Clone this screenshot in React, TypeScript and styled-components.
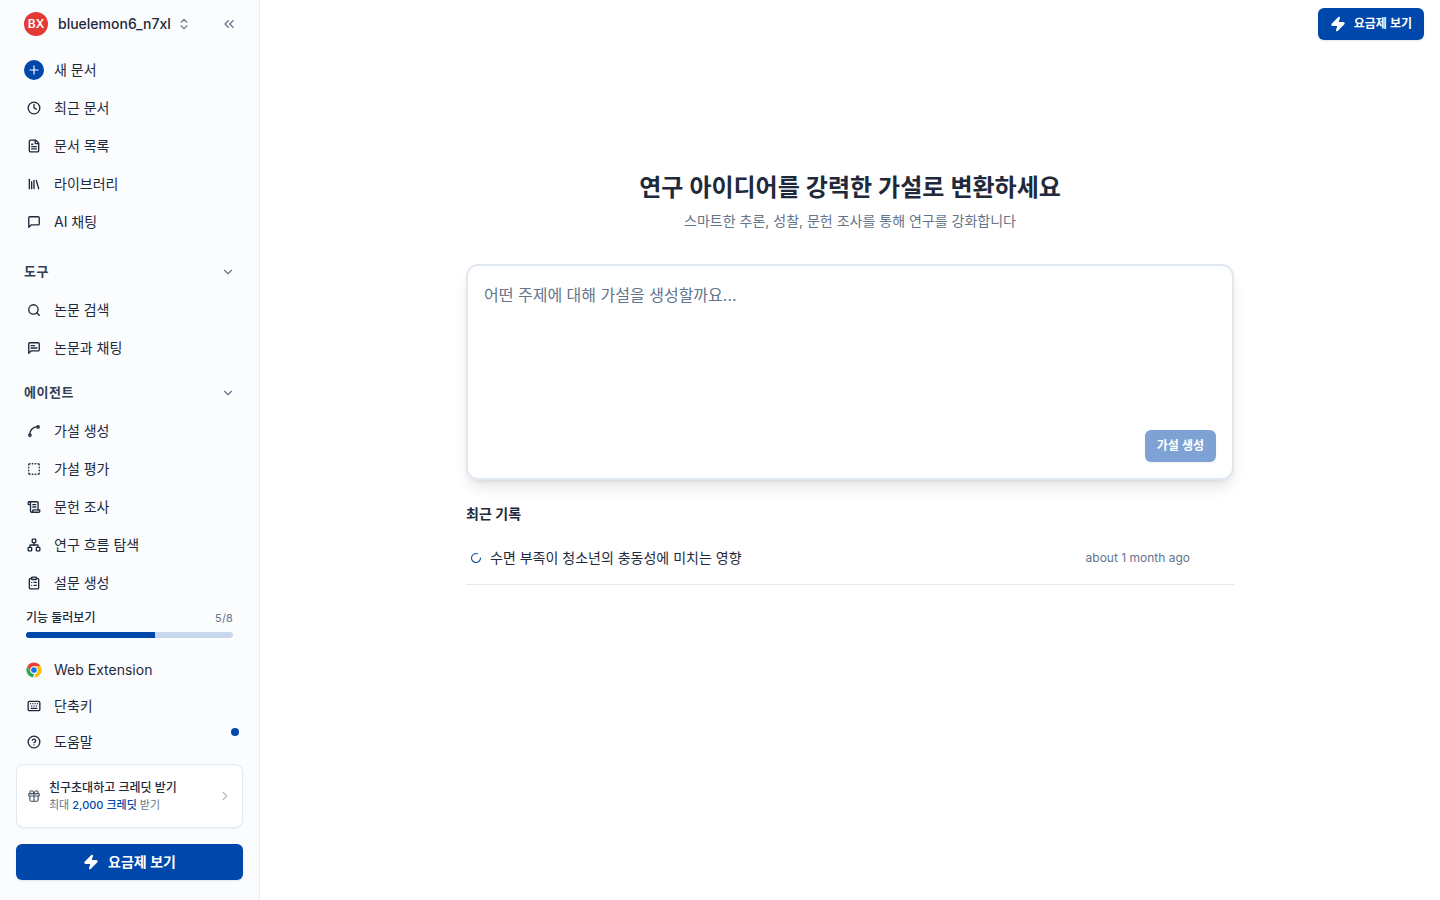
import React from "react";
import styled, { createGlobalStyle, css } from "styled-components";
import {
  ChevronDown,
  ChevronRight,
  ChevronsLeft,
  ChevronsUpDown,
  CircleHelp,
  ClipboardList,
  Clock,
  FileText,
  Gift,
  Keyboard,
  Library,
  Network,
  Plus,
  ScrollText,
  Search,
  Spline,
  SquareDashed,
} from "lucide-react";

const GlobalStyle = createGlobalStyle`
  *, *::before, *::after { box-sizing: border-box; }
  body {
    margin: 0;
    background: #fff;
    color: #1e293b;
    font-family: Inter, "Noto Sans CJK KR", sans-serif;
    font-size: 14px;
    line-height: 20px;
  }
  button { font: inherit; color: inherit; border: 0; background: none; padding: 0; }
  h1, h2, p { margin: 0; }
`;

const Page = styled.div`
  display: flex;
  height: 100vh;
  overflow: hidden;
`;

const Sidebar = styled.aside`
  display: flex;
  flex-direction: column;
  flex: none;
  width: 260px;
  background: #fbfcfe;
  border-right: 1px solid #e9edf3;
`;

const AccountBar = styled.header`
  display: flex;
  align-items: center;
  height: 48px;
  margin-bottom: 4px;
  padding: 0 22px 0 24px;
  color: #64748b;
`;

const Avatar = styled.span`
  display: flex;
  align-items: center;
  justify-content: center;
  width: 24px;
  height: 24px;
  margin-right: 10px;
  border-radius: 50%;
  background: #e53935;
  color: #fff;
  font-size: 12px;
  font-weight: 600;
`;

const AccountName = styled.span`
  margin-right: 6px;
  color: #1e293b;
  font-weight: 500;
`;

const CollapseButton = styled.button`
  display: flex;
  margin-left: auto;
`;

const NavList = styled.nav<{ $gap?: number }>`
  display: flex;
  flex-direction: column;
  gap: ${(p) => p.$gap ?? 2}px;
  padding: 0 16px;
`;

const NavItem = styled.a`
  position: relative;
  display: flex;
  align-items: center;
  gap: 10px;
  height: 36px;
  padding-left: 8px;
  color: #1e293b;
`;

const NavLabel = styled.span`
  padding-bottom: 1px;
`;

const NavIcon = styled.span<{ $filled?: boolean }>`
  display: flex;
  align-items: center;
  justify-content: center;
  width: 20px;
  height: 20px;
  ${(p) =>
    p.$filled &&
    css`
      border-radius: 50%;
      background: #0047ab;
      color: #fff;
    `}
`;

const NotificationDot = styled.span`
  position: absolute;
  top: 4px;
  right: 4px;
  width: 8px;
  height: 8px;
  border-radius: 50%;
  background: #0047ab;
`;

const SectionHeader = styled.div<{ $top: number }>`
  display: flex;
  align-items: center;
  justify-content: space-between;
  height: 36px;
  margin-top: ${(p) => p.$top}px;
  margin-bottom: 2px;
  padding: 0 24px;
  color: #64748b;
`;

const SectionTitle = styled.h2`
  padding-bottom: 2px;
  color: #334155;
  font-size: 13px;
  font-weight: 600;
  letter-spacing: 0.04em;
`;

const Tour = styled.div`
  padding: 0 26px;
  margin: 7px 0 14px;
`;

const TourLabels = styled.div`
  display: flex;
  justify-content: space-between;
  height: 24px;
  font-size: 12px;
  line-height: 20px;
  font-weight: 500;
`;

const TourCount = styled.span`
  color: #64748b;
  font-size: 11px;
  font-weight: 400;
  font-variant-numeric: tabular-nums;
`;

const TourTrack = styled.div`
  height: 6px;
  border-radius: 3px;
  background: #c7d7ed;
  overflow: hidden;
`;

const TourFill = styled.div`
  height: 100%;
  background: #0047ab;
`;

const InviteCard = styled.a`
  display: flex;
  align-items: center;
  height: 64px;
  margin: 4px 16px 16px;
  padding: 0 10px;
  border: 1px solid #e2e8f0;
  border-radius: 8px;
  background: #fff;
  box-shadow: 0 1px 2px rgba(0, 0, 0, 0.05);
  color: #475569;
`;

const InviteText = styled.div`
  flex: 1;
  margin-left: 8px;
  color: #64748b;
  font-size: 11px;
  line-height: 16px;
`;

const InviteTitle = styled.p`
  color: #1e293b;
  font-size: 12px;
  font-weight: 500;
  line-height: 18px;
`;

const Credits = styled.span`
  color: #0047ab;
  font-weight: 500;
`;

const PrimaryButton = styled.button<{ $size: "sm" | "md"; $disabled?: boolean }>`
  display: flex;
  align-items: center;
  justify-content: center;
  gap: ${(p) => (p.$size === "md" ? 9 : 8)}px;
  height: ${(p) => (p.$size === "md" ? 36 : 32)}px;
  padding: 0 12px;
  border-radius: 6px;
  background: #0047ab;
  color: #fff;
  font-size: ${(p) => (p.$size === "md" ? 14 : 12)}px;
  font-weight: 600;
  box-shadow: 0 1px 2px rgba(0, 0, 0, 0.1);
  opacity: ${(p) => (p.$disabled ? 0.5 : 1)};
`;

const SidebarAction = styled.div`
  display: grid;
  padding: 0 16px;
`;

const Main = styled.main`
  display: flex;
  flex: 1;
  flex-direction: column;
  align-items: center;
`;

const TopBar = styled.header`
  display: flex;
  justify-content: flex-end;
  align-items: center;
  align-self: stretch;
  height: 48px;
  padding-right: 16px;
`;

const Content = styled.div`
  width: 768px;
  padding-top: 122px;
`;

const Title = styled.h1`
  color: #1e293b;
  font-size: 24px;
  font-weight: 600;
  line-height: 36px;
  text-align: center;
`;

const Subtitle = styled.p`
  margin-top: 5px;
  color: #64748b;
  text-align: center;
`;

const Composer = styled.section`
  display: flex;
  flex-direction: column;
  justify-content: space-between;
  align-items: flex-end;
  height: 216px;
  margin-top: 33px;
  padding: 16px;
  border: 2px solid #e2e8f0;
  border-radius: 12px;
  background: #fff;
  box-shadow: 0 10px 15px -3px rgba(0, 0, 0, 0.1), 0 4px 6px -4px rgba(0, 0, 0, 0.1);
`;

const Placeholder = styled.p`
  align-self: stretch;
  color: #64748b;
  font-size: 16px;
  line-height: 26px;
`;

const HistoryTitle = styled.h2`
  margin-top: 24px;
  font-size: 14px;
  font-weight: 600;
`;

const HistoryRow = styled.div`
  display: flex;
  align-items: center;
  height: 54px;
  margin-top: 7px;
  padding: 0 44px 0 4px;
  border-bottom: 1px solid #e2e8f0;
`;

const HistoryName = styled.span`
  flex: 1;
  margin-left: 8px;
`;

const HistoryTime = styled.time`
  color: #64748b;
  font-size: 12px;
`;

const Bolt = ({ size }: { size: number }) => (
  <svg width={size} height={size} viewBox="0 0 24 24" fill="currentColor" stroke="currentColor" strokeWidth="2" strokeLinecap="round" strokeLinejoin="round">
    <path d="M4 14a1 1 0 0 1-.78-1.63l9.9-10.2a.5.5 0 0 1 .86.46l-1.92 6.02A1 1 0 0 0 13 10h7a1 1 0 0 1 .78 1.63l-9.9 10.2a.5.5 0 0 1-.86-.46l1.92-6.02A1 1 0 0 0 11 14z" />
  </svg>
);

const iconProps = { size: 14, strokeWidth: 2.3 };

const Bubble = ({ lines }: { lines?: boolean }) => (
  <svg width="14" height="14" viewBox="0 0 24 24" fill="none" stroke="currentColor" strokeWidth="2.3" strokeLinecap="round" strokeLinejoin="round">
    <path d="M21 15a2 2 0 0 1-2 2H7l-4 4V5a2 2 0 0 1 2-2h14a2 2 0 0 1 2 2z" />
    {lines && <path d="M13 8H7M17 12H7" />}
  </svg>
);

const ChromeLogo = () => (
  <svg width="16" height="16" viewBox="-1.5 -1.5 51 51">
    <path fill="#ea4335" d="M3.2 12A24 24 0 0 1 44.8 12H24L13.6 30Z" />
    <path fill="#fbbc05" d="M24 12h20.8A24 24 0 0 1 24 48l10.4-18Z" />
    <path fill="#34a853" d="M3.2 12 13.6 30A12 12 0 0 0 34.4 30L24 48A24 24 0 0 1 3.2 12Z" />
    <path d="M31 31 21.5 48" stroke="#fff" strokeWidth="4" />
    <circle cx="24" cy="24" r="12" fill="#fff" />
    <circle cx="24" cy="24" r="9" fill="#1a73e8" />
  </svg>
);

const Spinner = () => (
  <svg width="12" height="12" viewBox="0 0 24 24" fill="none" stroke="#0047ab" strokeWidth="2.2" strokeLinecap="round">
    <path d="M21 12a9 9 0 1 1-6.219-8.56" />
  </svg>
);

type Entry = { label: string; icon: React.ReactNode; filled?: boolean; dot?: boolean };

const mainEntries: Entry[] = [
  { label: "새 문서", icon: <Plus size={14} />, filled: true },
  { label: "최근 문서", icon: <Clock {...iconProps} /> },
  { label: "문서 목록", icon: <FileText {...iconProps} /> },
  { label: "라이브러리", icon: <Library {...iconProps} /> },
  { label: "AI 채팅", icon: <Bubble /> },
];

const toolEntries: Entry[] = [
  { label: "논문 검색", icon: <Search {...iconProps} /> },
  { label: "논문과 채팅", icon: <Bubble lines /> },
];

const agentEntries: Entry[] = [
  { label: "가설 생성", icon: <Spline {...iconProps} /> },
  { label: "가설 평가", icon: <SquareDashed {...iconProps} /> },
  { label: "문헌 조사", icon: <ScrollText {...iconProps} /> },
  { label: "연구 흐름 탐색", icon: <Network {...iconProps} /> },
  { label: "설문 생성", icon: <ClipboardList {...iconProps} /> },
];

const supportEntries: Entry[] = [
  { label: "Web Extension", icon: <ChromeLogo /> },
  { label: "단축키", icon: <Keyboard {...iconProps} /> },
  { label: "도움말", icon: <CircleHelp {...iconProps} />, dot: true },
];

const NavGroup = ({ entries, gap }: { entries: Entry[]; gap?: number }) => (
  <NavList $gap={gap}>
    {entries.map((e) => (
      <NavItem key={e.label}>
        <NavIcon $filled={e.filled}>{e.icon}</NavIcon>
        <NavLabel>{e.label}</NavLabel>
        {e.dot && <NotificationDot />}
      </NavItem>
    ))}
  </NavList>
);

const Section = ({ title, top }: { title: string; top: number }) => (
  <SectionHeader $top={top}>
    <SectionTitle>{title}</SectionTitle>
    <ChevronDown size={14} />
  </SectionHeader>
);

export default function App() {
  const done = 5;
  const total = 8;
  return (
    <Page>
      <GlobalStyle />
      <Sidebar>
        <AccountBar>
          <Avatar>BX</Avatar>
          <AccountName>bluelemon6_n7xl</AccountName>
          <ChevronsUpDown size={14} />
          <CollapseButton aria-label="collapse">
            <ChevronsLeft size={16} />
          </CollapseButton>
        </AccountBar>
        <NavGroup entries={mainEntries} />
        <Section title="도구" top={14} />
        <NavGroup entries={toolEntries} />
        <Section title="에이전트" top={9} />
        <NavGroup entries={agentEntries} />
        <Tour>
          <TourLabels>
            <span>기능 둘러보기</span>
            <TourCount>
              {done}/{total}
            </TourCount>
          </TourLabels>
          <TourTrack>
            <TourFill style={{ width: `${(done / total) * 100}%` }} />
          </TourTrack>
        </Tour>
        <NavGroup entries={supportEntries} gap={0} />
        <InviteCard>
          <Gift size={14} />
          <InviteText>
            <InviteTitle>친구초대하고 크레딧 받기</InviteTitle>
            <p>
              최대 <Credits>2,000 크레딧</Credits> 받기
            </p>
          </InviteText>
          <ChevronRight size={14} color="#b4bcc8" />
        </InviteCard>
        <SidebarAction>
          <PrimaryButton $size="md">
            <Bolt size={16} />
            요금제 보기
          </PrimaryButton>
        </SidebarAction>
      </Sidebar>
      <Main>
        <TopBar>
          <PrimaryButton $size="sm">
            <Bolt size={16} />
            요금제 보기
          </PrimaryButton>
        </TopBar>
        <Content>
          <Title>연구 아이디어를 강력한 가설로 변환하세요</Title>
          <Subtitle>스마트한 추론, 성찰, 문헌 조사를 통해 연구를 강화합니다</Subtitle>
          <Composer>
            <Placeholder>어떤 주제에 대해 가설을 생성할까요...</Placeholder>
            <PrimaryButton $size="sm" $disabled>
              가설 생성
            </PrimaryButton>
          </Composer>
          <HistoryTitle>최근 기록</HistoryTitle>
          <HistoryRow>
            <Spinner />
            <HistoryName>수면 부족이 청소년의 충동성에 미치는 영향</HistoryName>
            <HistoryTime>about 1 month ago</HistoryTime>
          </HistoryRow>
        </Content>
      </Main>
    </Page>
  );
}
